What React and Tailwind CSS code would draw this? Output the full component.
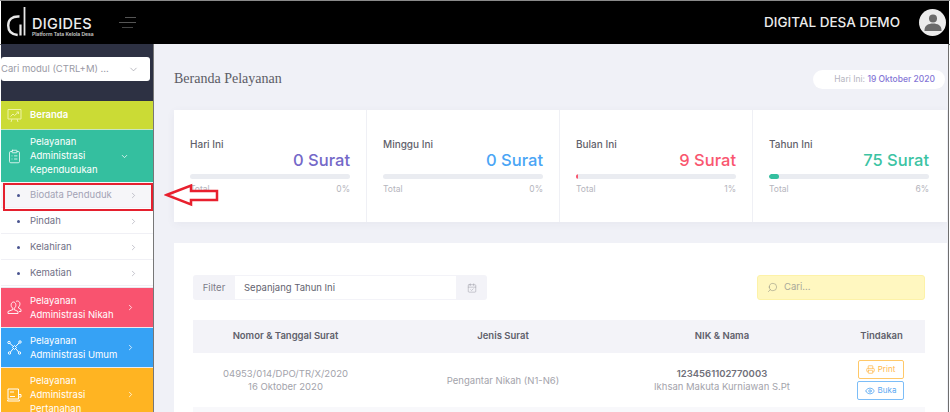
import { ChevronDown, ChevronRight, ClipboardList, CalendarCheck, Search, Printer, Eye } from 'lucide-react';

const subItems = ['Biodata Penduduk', 'Pindah', 'Kelahiran', 'Kematian'];

const stats = [
  { label: 'Hari Ini', value: '0 Surat', pct: '0%', width: 0, text: 'text-[#7468c8]', bar: 'bg-[#7468c8]', w: 'w-[193px] pr-[16px]' },
  { label: 'Minggu Ini', value: '0 Surat', pct: '0%', width: 0, text: 'text-[#4aa5f5]', bar: 'bg-[#4aa5f5]', w: 'w-[193px] pr-[16px]' },
  { label: 'Bulan Ini', value: '9 Surat', pct: '1%', width: 1, text: 'text-[#f9566f]', bar: 'bg-[#f9566f]', w: 'w-[193px] pr-[16px]' },
  { label: 'Tahun Ini', value: '75 Surat', pct: '6%', width: 6, text: 'text-[#3cc3a3]', bar: 'bg-[#34bf9f]', w: 'flex-1 pr-[18px]' },
];

const ChartIcon = () => (
  <svg width="15" height="15" viewBox="0 0 15 15" fill="none" stroke="currentColor" strokeWidth="1">
    <path d="M1 1.500h13v9.500H1z" />
    <path d="M3.500 8.500 6 6l1.500 1.500L11.500 4M9.500 4h2v2" />
    <path d="M5 11l-1 3M10 11l1 3" />
  </svg>
);

const UsersIcon = () => (
  <svg width="15" height="15" viewBox="0 0 15 15" fill="none" stroke="currentColor" strokeWidth="0.9">
    <path d="M6 8.500C4.300 7.500 4 5.800 4.200 4.300 4.500 2.800 5.500 2 6.500 2s2 .8 2.300 2.300c.2 1.500-.1 3.200-1.800 4.200v1l4 2v2H1v-2l5-2z" />
    <path d="M9 1.500c.5-.4 1-.5 1.500-.5 1.200 0 2.200 1 2.400 2.400.1 1.300-.2 2.700-1.400 3.600v1l2.500 1.500v2h-2" />
  </svg>
);

const NodesIcon = () => (
  <svg width="15" height="15" viewBox="0 0 15 15" fill="none" stroke="currentColor" strokeWidth="1">
    <path d="M7.500 5.500 9.500 7.500 7.500 9.500 5.500 7.500z" />
    <circle cx="2" cy="2.500" r="1.200" />
    <circle cx="13" cy="2" r="1.200" />
    <circle cx="2.500" cy="13" r="1.200" />
    <circle cx="12.500" cy="13" r="1.200" />
    <path d="M3 3.500 6 6.200M12 3 9 6.200M3.500 12 6 8.800M11.500 12 9 8.800" />
  </svg>
);

const ScreenIcon = () => (
  <svg width="15" height="14" viewBox="0 0 15 14" fill="none" stroke="currentColor" strokeWidth="1">
    <path d="M1 1h10.500v10H1z" />
    <path d="M11.500 6.500H14V9h-2.500M3 4h4M3 8.500h5M1 11.500l-.5 1.500h12l-.5-1.500" />
  </svg>
);

const SideItem = ({ bg, h, icon, lines }) => (
  <div className={`${bg} ${h} shrink-0 border-t border-[#e9e9ef] flex items-center text-white`}>
    <span className="ml-[6px] shrink-0 flex">{icon}</span>
    <span className="ml-[8px] w-[94px] text-[9.5px] leading-[14px]">{lines}</span>
    <ChevronRight size={9} strokeWidth={2} className="ml-[2px]" />
  </div>
);

const Sidebar = () => (
  <aside className="w-[152px] shrink-0 flex flex-col bg-[#2d3143] overflow-hidden">
    <div className="h-[57px] shrink-0 pt-[13px]">
      <div className="h-[24px] w-[149px] bg-white rounded-[3px] flex items-center justify-between pr-[11px] text-[9.5px] text-[#9a9aa5]">
        <span>Cari modul (CTRL+M) ...</span>
        <ChevronDown size={11} strokeWidth={1.5} />
      </div>
    </div>
    <div className="h-[28px] shrink-0 bg-[#cbdb35] flex items-center text-white">
      <span className="ml-[6px] flex text-[#eef3a8]"><ChartIcon /></span>
      <span className="ml-[8px] text-[9.5px] font-semibold">Beranda</span>
    </div>
    <div className="h-[53px] shrink-0 bg-[#34bf9f] border-t border-[#c9e6c0] flex items-center text-white">
      <ClipboardList size={15} strokeWidth={1.2} className="ml-[6px] shrink-0" />
      <span className="ml-[8px] w-[88px] text-[9.5px] leading-[14px]">Pelayanan Administrasi Kependudukan</span>
      <ChevronDown size={9} strokeWidth={2} className="ml-[2px]" />
    </div>
    <div className="relative shrink-0 bg-white">
      {subItems.map((item, i) => (
        <div key={item} className={`h-[26px] pt-[1px] flex items-center border-b border-[#f0f0f5] ${i === 0 ? 'bg-[#f6f6f9] text-[#a3a3b5]' : 'text-[#6f6f85]'}`}>
          <span className="ml-[16px] w-[3px] h-[3px] rounded-full bg-[#4a5590]" />
          <span className="ml-[10px] w-[99px] text-[9.5px]">{item}</span>
          <ChevronRight size={9} strokeWidth={1.5} className="text-[#9a9aa8]" />
        </div>
      ))}
      <div className="absolute left-[2px] top-[1px] w-[150px] h-[28px] border-[2px] border-[#e5202e]" />
    </div>
    <div className="h-[1px] shrink-0 bg-white" />
    <SideItem bg="bg-[#f9536f]" h="h-[40px]" icon={<UsersIcon />} lines="Pelayanan Administrasi Nikah" />
    <SideItem bg="bg-[#36a2f5]" h="h-[40px]" icon={<NodesIcon />} lines="Pelayanan Administrasi Umum" />
    <SideItem bg="bg-[#ffb422]" h="h-[54px]" icon={<ScreenIcon />} lines="Pelayanan Administrasi Pertanahan" />
  </aside>
);

const App = () => (
  <div className="relative w-[950px] h-[412px] overflow-hidden bg-white flex flex-col font-['Inter',sans-serif]">
    <div className="h-[1px] shrink-0 bg-[#8a8a8a]" />
    <header className="h-[43px] shrink-0 bg-black flex items-center text-[#ececec] ml-[1px] mr-[1px]">
      <svg width="20" height="30" viewBox="0 0 20 30" fill="none" stroke="#e8e8e8" className="ml-[6px] mt-[-1px]">
        <path d="M12.500 9.500C5 9 1.200 12.500 1.200 18.500c0 5.500 3.500 9 9.500 9.500" strokeWidth="2.400" />
        <path d="M13.500 17.500v11" strokeWidth="2.200" />
        <path d="M17.500 0v28.500" strokeWidth="1.800" />
      </svg>
      <div className="ml-[5px] mt-[8px] flex flex-col">
        <span className="text-[14.5px] leading-[15px] font-medium tracking-[0.3px]">DIGIDES</span>
        <span className="text-[5px] leading-[7px] font-semibold text-[#cfcfcf]">Platform Tata Kelola Desa</span>
      </div>
      <div className="ml-[25px] flex flex-col gap-[4px]">
        <span className="block h-[1px] w-[11px] ml-[6px] bg-[#555]" />
        <span className="block h-[1px] w-[17px] bg-[#555]" />
        <span className="block h-[1px] w-[11px] ml-[3px] bg-[#444]" />
      </div>
      <span className="ml-auto text-[13.5px] font-medium">DIGITAL DESA DEMO</span>
      <div className="ml-[19px] mr-[3px] w-[27px] h-[27px] rounded-full bg-[#ececec] flex items-center justify-center overflow-hidden">
        <svg width="20" height="21" viewBox="0 0 20 21" fill="#6b6b6b">
          <circle cx="10" cy="6.500" r="4" />
          <path d="M1.500 18c0-4.500 4-6.500 8.500-6.500s8.500 2 8.500 6.500v1h-17z" />
        </svg>
      </div>
    </header>
    <div className="h-[1px] shrink-0 bg-[#6e6e6e] -mb-[1px]" />
    <div className="flex-1 min-h-0 flex pl-[1px]">
      <Sidebar />
      <div className="w-[1px] shrink-0 bg-[#777]" />
      <main className="w-[794px] shrink-0 bg-[#f0f1f7] pl-[20px] pr-[1px] overflow-hidden">
        <div className="flex items-center justify-between h-[66px] pr-[2px] pt-[3px]">
          <h1 className="text-[14px] text-[#5c5c66] font-['Liberation_Serif',serif]">Beranda Pelayanan</h1>
          <div className="w-[132px] h-[19px] mt-[1px] bg-white rounded-full flex items-center justify-end pr-[10px] text-[8.5px] text-[#b5b5c0]">
            Hari Ini:&nbsp;<span className="font-medium text-[#8577d6]">19 Oktober 2020</span>
          </div>
        </div>
        <section className="h-[112px] bg-white flex shadow-[0_2px_8px_rgba(80,80,120,0.06)]">
          {stats.map((s, i) => (
            <div key={s.label} className={`${s.w} h-full pl-[16px] pt-[28px] ${i < 3 ? 'border-r border-[#eff0f5]' : ''}`}>
              <div className="text-[10px] leading-[13px] font-medium text-[#5f5f6b]">{s.label}</div>
              <div className={`text-[16.5px] leading-[18px] font-medium text-right ${s.text}`}>{s.value}</div>
              <div className="h-[5px] mt-[5px] rounded-full bg-[#eaecf1] overflow-hidden">
                <div className={`h-full rounded-full ${s.bar}`} style={{ width: `${s.width}%` }} />
              </div>
              <div className="flex justify-between mt-[4px] text-[8.5px] leading-[12px] text-[#b5b5bd]">
                <span>Total</span>
                <span>{s.pct}</span>
              </div>
            </div>
          ))}
        </section>
        <section className="h-[200px] mt-[21px] bg-white pt-[32px] pl-[19px] pr-[22px]">
          <div className="flex justify-between">
            <div className="w-[294px] h-[25px] flex rounded-[3px] bg-[#f3f3f8] text-[9.5px]">
              <span className="w-[42px] pt-[1px] flex items-center justify-center text-[#7c7c88]">Filter</span>
              <span className="flex-1 bg-white border-y border-[#f3f3f8] flex items-center pl-[9px] pt-[1px] text-[#63636f]">Sepanjang Tahun Ini</span>
              <span className="w-[31px] flex items-center justify-center text-[#9a9aa5]"><CalendarCheck size={10} strokeWidth={1.2} /></span>
            </div>
            <div className="w-[168px] h-[25px] rounded-[3px] bg-[#fff7c0] border border-[#fdf2a8] flex items-center pl-[9px] text-[9.5px] text-[#a8a89a]">
              <Search size={11} strokeWidth={1.2} className="-scale-x-100 text-[#8f8f80]" />
              <span className="ml-[6px]">Cari...</span>
            </div>
          </div>
          <table className="mt-[20px] w-full table-fixed border-collapse">
            <thead>
              <tr className="h-[33px] bg-[#f3f3f8] text-[9.5px] text-[#5f5f6b]">
                <th className="w-[185px] font-semibold">Nomor &amp; Tanggal Surat</th>
                <th className="w-[250px] font-semibold">Jenis Surat</th>
                <th className="w-[188px] font-semibold">NIK &amp; Nama</th>
                <th className="pl-[22px] font-semibold">Tindakan</th>
              </tr>
            </thead>
            <tbody>
              <tr className="h-[54px] text-center text-[9.5px] leading-[13px] text-[#a3a3ab]">
                <td>04953/014/DPO/TR/X/2020<br />16 Oktober 2020</td>
                <td>Pengantar Nikah (N1-N6)</td>
                <td>
                  <div className="font-semibold text-[#70707a]">1234561102770003</div>
                  <div>Ikhsan Makuta Kurniawan S.Pt</div>
                </td>
                <td className="pl-[20px]">
                  <div className="flex flex-col items-center gap-[2px] text-[8px]">
                    <span className="w-[46px] h-[19px] border border-[#ffc868] rounded-[2px] flex items-center justify-center gap-[3px] text-[#ffb84d]"><Printer size={9} />Print</span>
                    <span className="w-[47px] h-[19px] border border-[#7cbdf7] rounded-[2px] flex items-center justify-center gap-[3px] text-[#5aa8f2]"><Eye size={10} />Buka</span>
                  </div>
                </td>
              </tr>
              <tr className="h-[10px] bg-[#f8f8fb]"><td colSpan={4} /></tr>
            </tbody>
          </table>
        </section>
      </main>
      <div className="w-[1px] shrink-0 bg-[#6e6e6e]" />
    </div>
    {/* red arrow annotation */}
    <svg width="56" height="24" viewBox="0 0 56 24" fill="none" stroke="#e8202e" strokeWidth="2.5" className="absolute left-[164px] top-[183px]">
      <path d="M2.500 12 27 2.500v5.500h26v9H27v4.500z" />
    </svg>
  </div>
);

export default App;
